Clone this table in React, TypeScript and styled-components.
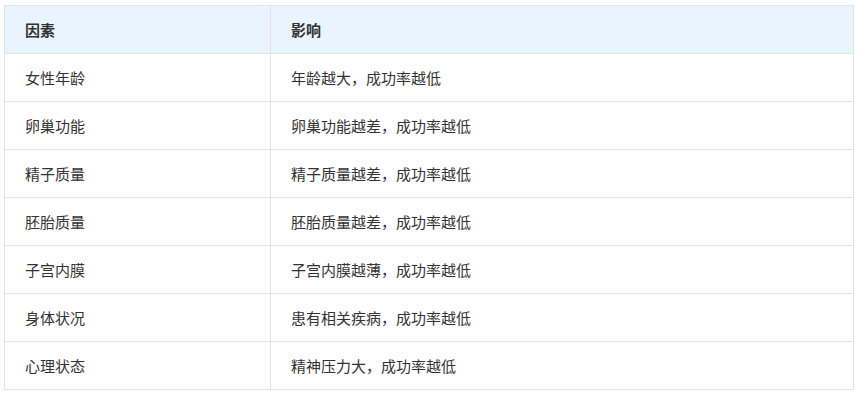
import styled, { createGlobalStyle } from "styled-components";

const GlobalStyle = createGlobalStyle`
    body {
        margin: 5px 7px 0 4px;
        background: #ffffff;
        font-family: "Noto Sans CJK SC", "Noto Sans", sans-serif;
        color: #333333;
    }
`

const Table = styled.table`
    width: 100%;
    border-collapse: collapse;
    border: 1px solid #e3e3e3;
    font-size: 15px;
`

const HeadCell = styled.th<{ $first?: boolean }>`
    background-color: #e9f5fe;
    font-weight: bold;
    text-align: left;
    height: 48px;
    padding: 0 20px;
    border: 1px solid #e3e3e3;
    width: ${props => props.$first ? "266px" : "auto"};
    line-height: 22px;
    box-sizing: border-box;
`

const Cell = styled.td`
    height: 48px;
    padding: 0 20px;
    border: 1px solid #e3e3e3;
    line-height: 22px;
    box-sizing: border-box;
`

const rows = [
    ["女性年龄", "年龄越大，成功率越低"],
    ["卵巢功能", "卵巢功能越差，成功率越低"],
    ["精子质量", "精子质量越差，成功率越低"],
    ["胚胎质量", "胚胎质量越差，成功率越低"],
    ["子宫内膜", "子宫内膜越薄，成功率越低"],
    ["身体状况", "患有相关疾病，成功率越低"],
    ["心理状态", "精神压力大，成功率越低"],
]

export default function App() {
    return (
        <>
            <GlobalStyle />
            <Table>
                <thead>
                    <tr>
                        <HeadCell $first>因素</HeadCell>
                        <HeadCell>影响</HeadCell>
                    </tr>
                </thead>
                <tbody>
                    {rows.map(([factor, effect]) => (
                        <tr key={factor}>
                            <Cell>{factor}</Cell>
                            <Cell>{effect}</Cell>
                        </tr>
                    ))}
                </tbody>
            </Table>
        </>
    )
}
